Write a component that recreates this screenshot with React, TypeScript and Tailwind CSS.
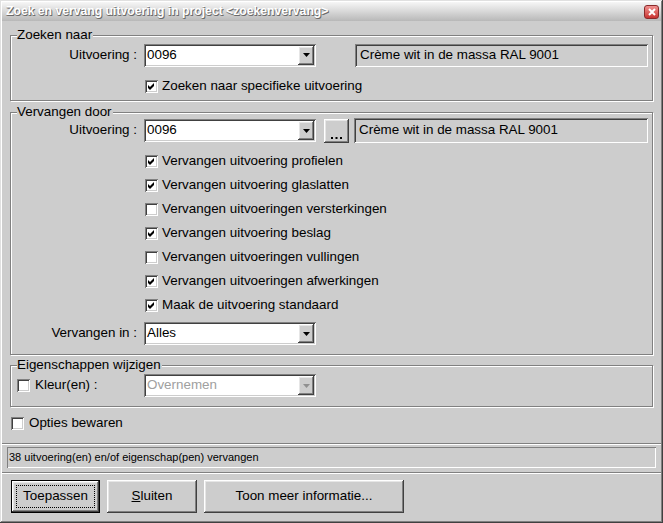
import React from "react";

const BG = "bg-[#cdcdcd]";
const SUNKEN =
  "shadow-[inset_1px_1px_0_#808080,inset_-1px_-1px_0_#ffffff,inset_2px_2px_0_#404040,inset_-2px_-2px_0_#cdcdcd]";
const SUNKEN_THIN = "shadow-[inset_1px_1px_0_#808080,inset_-1px_-1px_0_#ffffff]";
const RAISED =
  "shadow-[inset_-1px_-1px_0_#404040,inset_1px_1px_0_#ffffff,inset_-2px_-2px_0_#808080,inset_2px_2px_0_#e6e6e6]";
const ETCHED = "border border-[#808080] shadow-[inset_1px_1px_0_#ffffff,1px_1px_0_#ffffff]";

function Arrow({ disabled }: { disabled?: boolean }) {
  return (
    <svg width="7" height="4" viewBox="0 0 7 4">
      <path d="M0 0H7L3.5 4Z" fill={disabled ? "#909090" : "#000"} />
    </svg>
  );
}

function Combo({ value, disabled }: { value: string; disabled?: boolean }) {
  return (
    <div className={`flex h-[23px] w-[172px] bg-white p-[2px] ${SUNKEN}`}>
      <div
        className={`flex flex-1 items-center pl-[1px] text-[13.4px] ${
          disabled ? "text-[#a0a0a0]" : "text-black"
        }`}
      >
        {value}
      </div>
      <div className={`flex h-full w-[16px] items-center justify-center ${BG} ${RAISED}`}>
        <Arrow disabled={disabled} />
      </div>
    </div>
  );
}

function ReadBox({ value, h = 23, w = 293 }: { value: string; h?: number; w?: number }) {
  return (
    <div
      className={`flex items-center pl-[5px] text-[13.4px] ${BG} ${SUNKEN}`}
      style={{ height: h, width: w }}
    >
      {value}
    </div>
  );
}

function Check({ checked }: { checked?: boolean }) {
  return (
    <div className={`flex h-[13px] w-[13px] shrink-0 items-center justify-center bg-white ${SUNKEN}`}>
      {checked && (
        <svg width="7" height="7" viewBox="0 0 7 7">
          <path d="M0 2L2 4L6 0V3L2 7L0 5Z" fill="#000" />
        </svg>
      )}
    </div>
  );
}

function CheckRow({ label, checked }: { label: string; checked?: boolean }) {
  return (
    <div className="flex h-[24px] items-center pl-[134px]">
      <Check checked={checked} />
      <span className="ml-[4px] text-[13.4px]">{label}</span>
    </div>
  );
}

function Group({
  title,
  h,
  className,
  children,
}: {
  title: string;
  h: number;
  className?: string;
  children: React.ReactNode;
}) {
  return (
    <div className={`relative ${ETCHED} ${className ?? ""}`} style={{ height: h }}>
      <span className={`absolute -top-[9px] left-[6px] pr-[1px] text-[13.4px] leading-[16px] ${BG}`}>
        {title}
      </span>
      {children}
    </div>
  );
}

function Button({
  children,
  w,
  isDefault,
}: {
  children: React.ReactNode;
  w: number;
  isDefault?: boolean;
}) {
  if (isDefault) {
    return (
      <div className="h-[33px] border border-black" style={{ width: w }}>
        <div className={`flex h-full w-full items-center justify-center p-[4px] ${BG} ${RAISED}`}>
          <div className="flex h-full w-full items-center justify-center border border-dotted border-black text-[13.4px]">
            {children}
          </div>
        </div>
      </div>
    );
  }
  return (
    <div
      className={`flex h-[33px] items-center justify-center text-[13.4px] ${BG} ${RAISED}`}
      style={{ width: w }}
    >
      {children}
    </div>
  );
}

export default function App() {
  return (
    <div
      className={`flex h-[523px] w-[663px] flex-col p-[2px] text-black ${BG} shadow-[inset_-1px_-1px_0_#404040,inset_1px_1px_0_#e0e0e0,inset_-2px_-2px_0_#808080,inset_2px_2px_0_#ffffff]`}
      style={{ fontFamily: '"Liberation Sans", Arial, sans-serif' }}
    >
      {/* Title bar */}
      <div className="flex h-[19px] items-center justify-between bg-linear-to-b from-[#f6f6f6] via-[#d8d8d8] to-[#b8b8b8] pl-[4px] pr-[2px]">
        <span className="text-[12.2px] font-bold text-white [text-shadow:1px_1px_0_#6a6a6a,0_1px_0_#8a8a8a]">
          Zoek en vervang uitvoering in project &lt;zoekenvervang&gt;
        </span>
        <div className="flex h-[14px] w-[15px] items-center justify-center rounded-[3px] border border-[#8a2a2a] bg-linear-to-b from-[#f09090] to-[#c83030]">
          <svg width="8" height="8" viewBox="0 0 8 8">
            <path d="M1 1L7 7M7 1L1 7" stroke="#fff" strokeWidth="2" />
          </svg>
        </div>
      </div>

      {/* Client */}
      <div className="flex flex-1 flex-col px-[8px]">
        <Group title="Zoeken naar" h={66} className="mt-[14px]">
          <div className="flex flex-col pt-[7px]">
            <div className="flex h-[24px] items-center">
              <div className="w-[126px] text-right text-[13.4px]">Uitvoering :</div>
              <div className="ml-[7px]">
                <Combo value="0096" />
              </div>
              <div className="ml-[39px]">
                <ReadBox value="Crème wit in de massa RAL 9001" />
              </div>
            </div>
            <div className="mt-[11px] flex h-[16px] items-center pl-[134px]">
              <Check checked />
              <span className="ml-[4px] text-[13.4px]">Zoeken naar specifieke uitvoering</span>
            </div>
          </div>
        </Group>

        <Group title="Vervangen door" h={243} className="mt-[11px]">
          <div className="flex flex-col pt-[5px]">
            <div className="flex h-[25px] items-center">
              <div className="w-[126px] text-right text-[13.4px]">Uitvoering :</div>
              <div className="ml-[7px]">
                <Combo value="0096" />
              </div>
              <div
                className={`ml-[8px] flex h-[24px] w-[25px] items-end justify-center pb-[4px] ${RAISED}`}
              >
                <svg width="11" height="2" viewBox="0 0 11 2">
                  <rect x="0" y="0" width="2" height="2" fill="#000" />
                  <rect x="4.5" y="0" width="2" height="2" fill="#000" />
                  <rect x="9" y="0" width="2" height="2" fill="#000" />
                </svg>
              </div>
              <div className="ml-[5px]">
                <ReadBox value="Crème wit in de massa RAL 9001" h={25} w={294} />
              </div>
            </div>
            <div className="mt-[6px] flex flex-col">
              <CheckRow label="Vervangen uitvoering profielen" checked />
              <CheckRow label="Vervangen uitvoering glaslatten" checked />
              <CheckRow label="Vervangen uitvoeringen versterkingen" />
              <CheckRow label="Vervangen uitvoering beslag" checked />
              <CheckRow label="Vervangen uitvoeringen vullingen" />
              <CheckRow label="Vervangen uitvoeringen afwerkingen" checked />
              <CheckRow label="Maak de uitvoering standaard" checked />
            </div>
            <div className="mt-[5px] flex h-[23px] items-center">
              <div className="w-[126px] text-right text-[13.4px]">Vervangen in :</div>
              <div className="ml-[7px]">
                <Combo value="Alles" />
              </div>
            </div>
          </div>
        </Group>

        <Group title="Eigenschappen wijzigen" h={42} className="mt-[10px]">
          <div className="mt-[8px] flex h-[23px] items-center">
            <div className="flex w-[133px] items-center pl-[6px]">
              <Check />
              <span className="ml-[5px] text-[13.4px]">Kleur(en) :</span>
            </div>
            <Combo value="Overnemen" disabled />
          </div>
        </Group>

        <div className="mt-[8px] flex h-[16px] items-center pl-[1px]">
          <Check />
          <span className="ml-[5px] text-[13.4px]">Opties bewaren</span>
        </div>

        <div className="-mx-[8px] mt-[12px] h-[2px] border-t border-b border-t-[#808080] border-b-white" />

        <div className={`-mx-[3px] mt-[2px] flex h-[21px] items-center pl-[2px] text-[11px] ${SUNKEN_THIN}`}>
          38 uitvoering(en) en/of eigenschap(pen) vervangen
        </div>

        <div className="-mx-[8px] mt-[4px] h-[2px] border-t border-b border-t-[#808080] border-b-white" />

        <div className="mt-[6px] flex gap-[7px] pl-[1px]">
          <Button w={89} isDefault>
            Toepassen
          </Button>
          <Button w={90}>
            <span>
              <span className="underline">S</span>luiten
            </span>
          </Button>
          <Button w={200}>Toon meer informatie...</Button>
        </div>
      </div>
    </div>
  );
}
